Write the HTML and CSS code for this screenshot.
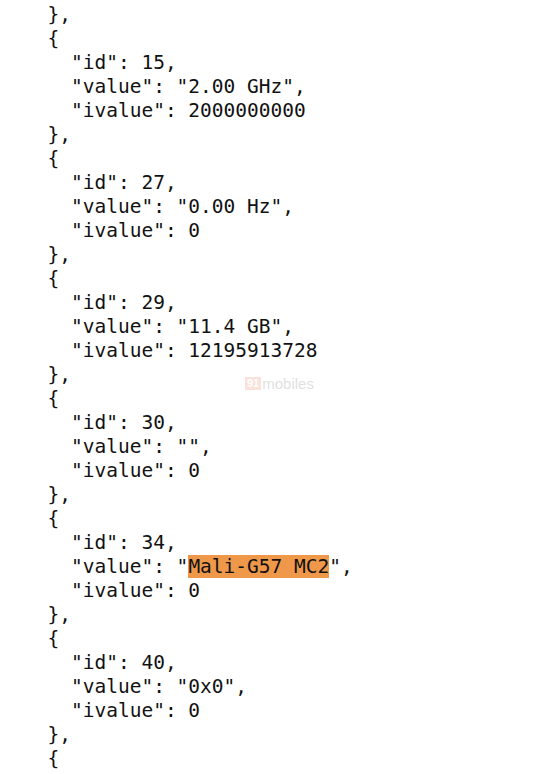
FILE: index.html
```html
<!DOCTYPE html>
<html>
<head>
<meta charset="utf-8">
<link rel="stylesheet" href="styles.css">
</head>
<body>
<div class="page">
<pre class="code">  },
  {
    "id": 15,
    "value": "2.00 GHz",
    "ivalue": 2000000000
  },
  {
    "id": 27,
    "value": "0.00 Hz",
    "ivalue": 0
  },
  {
    "id": 29,
    "value": "11.4 GB",
    "ivalue": 12195913728
  },
  {
    "id": 30,
    "value": "",
    "ivalue": 0
  },
  {
    "id": 34,
    "value": "<span class="hl">Mali-G57 MC2</span>",
    "ivalue": 0
  },
  {
    "id": 40,
    "value": "0x0",
    "ivalue": 0
  },
  {</pre>
<div class="mark"><span class="mark-num">91</span><span class="mark-word">mobiles</span></div>
</div>
</body>
</html>
```
FILE: styles.css
```css
html, body {
  margin: 0;
  padding: 0;
  background: #ffffff;
}
.page {
  position: relative;
  width: 556px;
  height: 774px;
  overflow: hidden;
}
.code {
  margin: 0;
  padding: 3px 0 0 24px;
  font-family: "DejaVu Sans Mono", monospace;
  font-size: 19.5px;
  line-height: 24px;
  color: #111111;
  white-space: pre;
}
.hl {
  background: #f0984a;
}
.mark {
  position: absolute;
  left: 245px;
  top: 376px;
  display: flex;
  align-items: center;
  gap: 1px;
  opacity: 0.18;
  font-family: "Liberation Sans", Arial, sans-serif;
}
.mark-num {
  background: #e8603a;
  color: #ffffff;
  font-size: 11px;
  font-weight: bold;
  padding: 0 2px;
  line-height: 13px;
}
.mark-word {
  color: #555555;
  font-size: 15px;
  line-height: 15px;
}
```
